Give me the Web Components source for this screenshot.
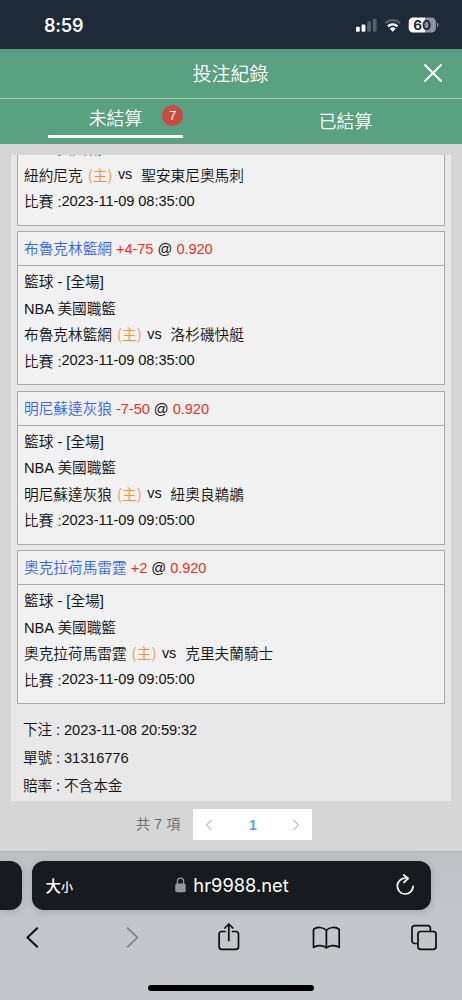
<!DOCTYPE html>
<html lang="zh-Hant">
<head>
<meta charset="UTF-8">
<meta name="viewport" content="width=device-width, initial-scale=1.0">
<title>投注紀錄</title>
<style>
  body {
    margin: 0;
    width: 462px;
    height: 1000px;
    overflow: hidden;
    background: #d6d6d6;
    font-family: "Liberation Sans", "Noto Sans CJK TC", sans-serif;
    color: #111;
  }
</style>
</head>
<body>

<phone-screen>
  <status-bar time="8:59" battery="60"></status-bar>
  <page-header>投注紀錄</page-header>
  <tab-bar>
    <tab-item active count="7">未結算</tab-item>
    <tab-item>已結算</tab-item>
  </tab-bar>
  <bet-panel>
    <bet-card league="NBA 美國職籃" home="紐約尼克" away="聖安東尼奧馬刺" date="2023-11-09 08:35:00"></bet-card>
    <bet-card sport="籃球 - [全場]" league="NBA 美國職籃" home="布魯克林籃網" line="+4-75" odds="0.920" away="洛杉磯快艇" date="2023-11-09 08:35:00"></bet-card>
    <bet-card sport="籃球 - [全場]" league="NBA 美國職籃" home="明尼蘇達灰狼" line="-7-50" odds="0.920" away="紐奧良鵜鶘" date="2023-11-09 09:05:00"></bet-card>
    <bet-card sport="籃球 - [全場]" league="NBA 美國職籃" home="奧克拉荷馬雷霆" line="+2" odds="0.920" away="克里夫蘭騎士" date="2023-11-09 09:05:00"></bet-card>
    <div slot="info">下注 : 2023-11-08 20:59:32</div>
    <div slot="info">單號 : 31316776</div>
    <div slot="info">賠率 : 不含本金</div>
  </bet-panel>
  <page-pager total="7" page="1"></page-pager>
  <browser-bar>hr9988.net</browser-bar>
</phone-screen>

<script>
class BaseElement extends HTMLElement {
  constructor() {
    super();
    this.attachShadow({ mode: "open" });
  }

  connectedCallback() {
    this.shadowRoot.innerHTML = this.render();
  }

  attr(name) {
    return this.getAttribute(name) || "";
  }
}

class PhoneScreen extends BaseElement {
  render() {
    return `
      <style>
        :host {
          display: flex;
          flex-direction: column;
          width: 462px;
          height: 1000px;
          overflow: hidden;
        }
      </style>
      <slot></slot>
    `;
  }
}

class StatusBar extends BaseElement {
  render() {
    return `
      <style>
        :host {
          display: flex;
          flex: none;
          justify-content: space-between;
          align-items: center;
          box-sizing: border-box;
          height: 49px;
          padding: 1px 20px 0 44px;
          background: #1e2a39;
          color: #fff;
          font-family: Inter, sans-serif;
        }
        .time { font-size: 18px; font-weight: 600; letter-spacing: -0.2px; }
        svg { display: block; }
      </style>
      <span class="time">${this.attr("time")}</span>
      <svg width="92" height="20" viewBox="350 15 92 20">
        <rect x="356" y="26.8" width="3.8" height="5" rx="1" fill="#fff"/>
        <rect x="361.6" y="24.6" width="3.8" height="7.2" rx="1" fill="#fff"/>
        <rect x="367.2" y="21.6" width="3.8" height="10.2" rx="1" fill="#56606c"/>
        <rect x="372.8" y="18.8" width="3.8" height="13" rx="1" fill="#56606c"/>
        <path d="M385.300 23.100a10.600 10.600 0 0 1 14.800 0" fill="none" stroke="#56606c" stroke-width="2.3"/>
        <path d="M387.900 26.300a6.900 6.900 0 0 1 9.600 0" fill="none" stroke="#fff" stroke-width="2.3"/>
        <path d="M389.700 28.800a4.300 4.300 0 0 1 6 0l-3 3z" fill="#fff"/>
        <path d="M413 17.600h12v15h-12a4.300 4.300 0 0 1-4.300-4.300v-6.400a4.300 4.300 0 0 1 4.300-4.300z" fill="#fff"/>
        <path d="M425 17.600h6.600a4.300 4.300 0 0 1 4.300 4.300v6.400a4.300 4.300 0 0 1-4.300 4.300h-6.600z" fill="#8e949c"/>
        <path d="M437 22.600q1.400.6 1.400 2.500t-1.400 2.500z" fill="#8e949c"/>
        <text x="422.200" y="30.100" text-anchor="middle" font-size="13.500" font-weight="700" fill="#1e2a39">${this.attr("battery")}</text>
      </svg>
    `;
  }
}

class PageHeader extends BaseElement {
  render() {
    return `
      <style>
        :host {
          display: grid;
          flex: none;
          grid-template-columns: 60px 1fr 58px;
          align-items: center;
          box-sizing: border-box;
          height: 50px;
          border-bottom: 1px solid #b4bfb9;
          background: #5aa182;
          color: #fff;
          font-size: 19px;
          font-weight: 350;
        }
        .title { grid-column: 2; text-align: center; padding: 0 3px 2px 0; }
        svg { justify-self: center; }
      </style>
      <span class="title"><slot></slot></span>
      <svg width="22" height="22" viewBox="0 0 22 22">
        <path d="M3 2L19 18M19 2L3 18" stroke="#fff" stroke-width="1.900" stroke-linecap="round"/>
      </svg>
    `;
  }
}

class TabBar extends BaseElement {
  render() {
    return `
      <style>
        :host {
          display: grid;
          flex: none;
          grid-template-columns: 1fr 1fr;
          height: 45px;
          background: #5aa182;
          color: #fff;
        }
      </style>
      <slot></slot>
    `;
  }
}

class TabItem extends BaseElement {
  render() {
    const active = this.hasAttribute("active");
    return `
      <style>
        :host {
          display: flex;
          justify-content: center;
          font-size: 17.8px;
          font-weight: 350;
        }
        .tab {
          position: relative;
          box-sizing: border-box;
          width: 135px;
          height: 39px;
          line-height: 38px;
          text-align: center;
          border-bottom: ${active ? "3px solid #fff" : "0"};
          padding: ${active ? "1px 0 0" : "4px 2px 0 0"};
        }
        .badge {
          position: absolute;
          top: 6px;
          right: 0;
          width: 21px;
          height: 21px;
          border-radius: 50%;
          background: #c94b41;
          font-size: 13px;
          line-height: 21px;
        }
      </style>
      <div class="tab">
        <slot></slot>
        ${active ? `<span class="badge">${this.attr("count")}</span>` : ""}
      </div>
    `;
  }
}

class BetPanel extends BaseElement {
  render() {
    return `
      <style>
        :host {
          display: flex;
          flex-direction: column;
          justify-content: flex-end;
          flex: none;
          gap: 5.5px;
          box-sizing: border-box;
          height: 646px;
          margin: 11px 11px 0;
          padding: 0 6px 1px;
          overflow: hidden;
          background: #e8e8e8;
        }
        .info {
          margin-top: 6.5px;
          padding-left: 6px;
          font-size: 14.67px;
          font-weight: 350;
          letter-spacing: -0.1px;
          line-height: 28px;
        }
      </style>
      <slot></slot>
      <div class="info"><slot name="info"></slot></div>
    `;
  }
}

class BetCard extends BaseElement {
  render() {
    const head = this.attr("odds") ? `
      <div class="head">
        <span class="team">${this.attr("home")}</span>
        <span class="red">${this.attr("line")}</span>
        @
        <span class="red">${this.attr("odds")}</span>
      </div>` : "";
    const sport = this.attr("sport") ? `<div class="row">${this.attr("sport")}</div>` : "";

    return `
      <style>
        :host {
          display: block;
          flex: none;
          box-sizing: border-box;
          border: 1px solid #a9a9a9;
          background: #f1f1f1;
          font-size: 14.67px;
          font-weight: 350;
        }
        .head {
          height: 32px;
          line-height: 33px;
          padding: 1px 0 0 6px;
          border-bottom: 1px solid #a9a9a9;
        }
        .team { color: #3366f0; }
        .red { color: #ee3124; letter-spacing: -0.1px; }
        .body { padding: 3px 6px 8.6px; }
        .row {
          display: flex;
          height: 26.6px;
          line-height: 26.6px;
          white-space: pre;
        }
        .host {
          margin: -1px 5px 0;
          color: #f5923b;
          font-family: "Noto Sans CJK TC", sans-serif;
          letter-spacing: 0.3px;
        }
        .vs { margin: -1.5px 9px 0 0; font-size: 14.4px; }
        .date { margin-top: -1.5px; letter-spacing: -0.1px; }
      </style>
      ${head}
      <div class="body">
        ${sport}
        <div class="row">${this.attr("league")}</div>
        <div class="row"><span>${this.attr("home")}</span><span class="host">(主)</span><span class="vs">vs</span><span>${this.attr("away")}</span></div>
        <div class="row"><span>比賽 :</span><span class="date">${this.attr("date")}</span></div>
      </div>
    `;
  }
}

class PagePager extends BaseElement {
  render() {
    return `
      <style>
        :host {
          display: flex;
          flex: none;
          align-items: center;
          height: 50px;
          padding: 0 0 0 136px;
          box-sizing: border-box;
          font-size: 14px;
          font-weight: 350;
          color: #68696c;
        }
        .total { width: 57px; white-space: nowrap; margin-top: -6px; letter-spacing: 0.2px; }
        .box {
          display: grid;
          grid-template-columns: 31px 1fr 33px;
          align-items: center;
          justify-items: center;
          width: 119px;
          height: 31px;
          margin-top: -3px;
          background: #fff;
        }
        b { color: #5a9cf8; font-size: 14px; padding-left: 3px; }
        path { fill: none; stroke: #c3c6cd; stroke-width: 1.4; }
      </style>
      <span class="total">共 ${this.attr("total")} 項</span>
      <div class="box">
        <svg width="8" height="12" viewBox="0 0 8 12"><path d="M6.500 1L1.500 6l5 5"/></svg>
        <b>${this.attr("page")}</b>
        <svg width="8" height="12" viewBox="0 0 8 12"><path d="M1.500 1l5 5-5 5"/></svg>
      </div>
    `;
  }
}

class BrowserBar extends BaseElement {
  render() {
    return `
      <style>
        :host {
          display: flex;
          flex-direction: column;
          flex: none;
          box-sizing: border-box;
          height: 149px;
          padding-top: 8.5px;
          border-top: 1px solid #b6b8bb;
          background: linear-gradient(#bcc1c6, #c3c6cb 60px);
        }
        .address { display: flex; gap: 9.5px; height: 49px; }
        .prev {
          width: 22px;
          border-radius: 0 12px 12px 0;
          background: #171b20;
          box-shadow: 0 2px 8px rgba(0,0,0,0.15);
        }
        .url {
          display: grid;
          grid-template-columns: 60px 1fr 51px;
          align-items: center;
          width: 399px;
          border-radius: 12px;
          background: #171b20;
          color: #fff;
          box-shadow: 0 2px 8px rgba(0,0,0,0.15);
        }
        .size {
          padding-left: 14px;
          font-family: "Noto Sans CJK TC", sans-serif;
          font-size: 15.5px;
          font-weight: 500;
        }
        .size small { font-size: 12px; }
        .site {
          display: flex;
          align-items: center;
          justify-content: center;
          gap: 7px;
          padding: 0 7px 0 0;
          font-family: Inter, sans-serif;
          font-size: 18.3px;
        }
        .tools {
          display: grid;
          grid-template-columns: 100px 97px 97px 98px 40px;
          padding-left: 12px;
          margin-top: 8.5px;
        }
        .tools svg, .reload {
          fill: none;
          stroke: #0c0d0e;
          stroke-width: 1.7;
          stroke-linecap: round;
          stroke-linejoin: round;
        }
        .reload { stroke: #fff; justify-self: center; }
        .home {
          align-self: center;
          width: 166px;
          height: 6px;
          margin-top: 27px;
          border-radius: 3px;
          background: #000;
        }
      </style>
      <div class="address">
        <div class="prev"></div>
        <div class="url">
          <span class="size">大<small>小</small></span>
          <span class="site">
            <svg width="11" height="16" viewBox="0 0 11 16">
              <rect x="0.300" y="6.500" width="10.400" height="8.700" rx="1.600" fill="#96979d"/>
              <path d="M2.400 7V4.300a3.100 3.100 0 0 1 6.200 0V7" fill="none" stroke="#96979d" stroke-width="1.3"/>
            </svg>
            <slot></slot>
          </span>
          <svg class="reload" width="24" height="24" viewBox="394 873 24 24">
            <path d="M406.500 878.200a7.900 7.900 0 1 0 7.600 8.200M404.800 875l4.400 3.400-4.200 4"/>
          </svg>
        </div>
      </div>
      <div class="tools">
        <svg width="40" height="40" viewBox="12 918 40 40"><path d="M37.200 928.200L27.400 937.500l9.800 9.300" stroke-width="2"/></svg>
        <svg width="40" height="40" viewBox="112 918 40 40"><path d="M127.700 928.200l9.800 9.300-9.800 9.300" style="stroke:#7c7e82"/></svg>
        <svg width="40" height="40" viewBox="209 918 40 40">
          <path d="M225 931.500h-3.300a2.600 2.600 0 0 0-2.600 2.600v12.600a2.600 2.600 0 0 0 2.600 2.600h14.200a2.600 2.600 0 0 0 2.600-2.600v-12.600a2.600 2.600 0 0 0-2.600-2.600h-3.300M228.800 940.500v-16M224.800 928l4-4 4 4"/>
        </svg>
        <svg width="40" height="40" viewBox="306 918 40 40">
          <path d="M326.400 930.200c-3-3.300-9.500-3.700-12.900-.8v18c3.400-2.500 9.900-2.200 12.900.6 3-2.800 9.500-3.100 12.800-.6v-18c-3.300-2.900-9.800-2.500-12.800.8zM326.400 930.200v17.800"/>
        </svg>
        <svg width="40" height="40" viewBox="404 918 40 40">
          <path d="M418 943.500h-3.400a2.600 2.600 0 0 1-2.600-2.600v-12.600a2.600 2.600 0 0 1 2.600-2.600h13.200a2.600 2.600 0 0 1 2.600 2.600v3"/>
          <rect x="418" y="931.500" width="18" height="17.800" rx="2.600"/>
        </svg>
      </div>
      <div class="home"></div>
    `;
  }
}

customElements.define("phone-screen", PhoneScreen);
customElements.define("status-bar", StatusBar);
customElements.define("page-header", PageHeader);
customElements.define("tab-bar", TabBar);
customElements.define("tab-item", TabItem);
customElements.define("bet-panel", BetPanel);
customElements.define("bet-card", BetCard);
customElements.define("page-pager", PagePager);
customElements.define("browser-bar", BrowserBar);
</script>
</body>
</html>
